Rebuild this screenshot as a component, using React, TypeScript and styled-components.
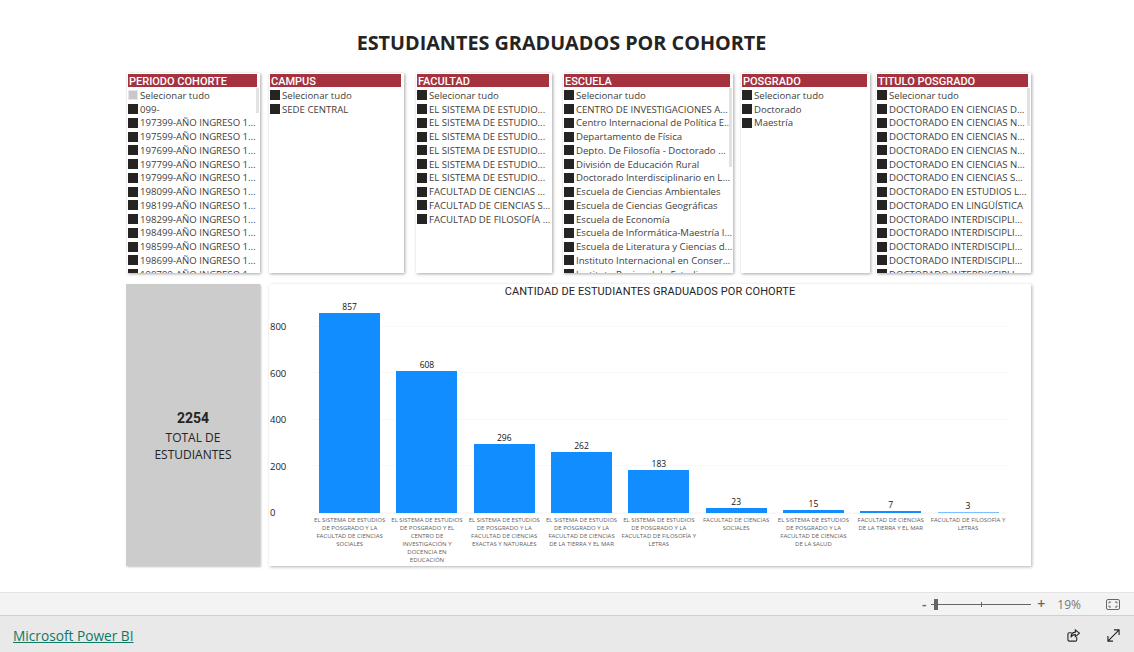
import styled, { createGlobalStyle } from 'styled-components';

const SEGOE = `"Open Sans", "Noto Sans", sans-serif`;
const DIN = `Roboto, "Liberation Sans", sans-serif`;

const SLICERS = [
  {
    title: 'PERIODO COHORTE',
    width: 133,
    gap: 9,
    thumb: 25,
    partial: true,
    items: [
      '099-',
      '197399-AÑO INGRESO 1...',
      '197599-AÑO INGRESO 1...',
      '197699-AÑO INGRESO 1...',
      '197799-AÑO INGRESO 1...',
      '197999-AÑO INGRESO 1...',
      '198099-AÑO INGRESO 1...',
      '198199-AÑO INGRESO 1...',
      '198299-AÑO INGRESO 1...',
      '198499-AÑO INGRESO 1...',
      '198599-AÑO INGRESO 1...',
      '198699-AÑO INGRESO 1...',
      '198799-AÑO INGRESO 1...',
    ],
  },
  { title: 'CAMPUS', width: 135, gap: 12, items: ['SEDE CENTRAL'] },
  {
    title: 'FACULTAD',
    width: 136,
    gap: 11,
    items: [
      'EL SISTEMA DE ESTUDIO...',
      'EL SISTEMA DE ESTUDIO...',
      'EL SISTEMA DE ESTUDIO...',
      'EL SISTEMA DE ESTUDIO...',
      'EL SISTEMA DE ESTUDIO...',
      'EL SISTEMA DE ESTUDIO...',
      'FACULTAD DE CIENCIAS ...',
      'FACULTAD DE CIENCIAS S...',
      'FACULTAD DE FILOSOFÍA ...',
    ],
  },
  {
    title: 'ESCUELA',
    width: 170,
    gap: 8,
    thumb: 79,
    items: [
      'CENTRO DE INVESTIGACIONES A...',
      'Centro Internacional de Política E...',
      'Departamento de Física',
      'Depto. De Filosofía - Doctorado ...',
      'División de Educación Rural',
      'Doctorado Interdisciplinario en L...',
      'Escuela de Ciencias Ambientales',
      'Escuela de Ciencias Geográficas',
      'Escuela de Economía',
      'Escuela de Informática-Maestría I...',
      'Escuela de Literatura y Ciencias d...',
      'Instituto Internacional en Conser...',
      'Instituto Regional de Estudios...',
    ],
  },
  { title: 'POSGRADO', width: 129, gap: 6, items: ['Doctorado', 'Maestría'] },
  {
    title: 'TITULO POSGRADO',
    width: 155,
    gap: 0,
    thumb: 38,
    items: [
      'DOCTORADO EN CIENCIAS D...',
      'DOCTORADO EN CIENCIAS N...',
      'DOCTORADO EN CIENCIAS N...',
      'DOCTORADO EN CIENCIAS N...',
      'DOCTORADO EN CIENCIAS N...',
      'DOCTORADO EN CIENCIAS S...',
      'DOCTORADO EN ESTUDIOS L...',
      'DOCTORADO EN LINGÜÍSTICA',
      'DOCTORADO INTERDISCIPLI...',
      'DOCTORADO INTERDISCIPLI...',
      'DOCTORADO INTERDISCIPLI...',
      'DOCTORADO INTERDISCIPLI...',
      'DOCTORADO INTERDISCIPLI...',
    ],
  },
];

const BARS = [
  { value: 857, label: 'EL SISTEMA DE ESTUDIOS\nDE POSGRADO Y LA\nFACULTAD DE CIENCIAS\nSOCIALES' },
  { value: 608, label: 'EL SISTEMA DE ESTUDIOS\nDE POSGRADO Y EL\nCENTRO DE\nINVESTIGACIÓN Y\nDOCENCIA EN\nEDUCACIÓN' },
  { value: 296, label: 'EL SISTEMA DE ESTUDIOS\nDE POSGRADO Y LA\nFACULTAD DE CIENCIAS\nEXACTAS Y NATURALES' },
  { value: 262, label: 'EL SISTEMA DE ESTUDIOS\nDE POSGRADO Y LA\nFACULTAD DE CIENCIAS\nDE LA TIERRA Y EL MAR' },
  { value: 183, label: 'EL SISTEMA DE ESTUDIOS\nDE POSGRADO Y LA\nFACULTAD DE FILOSOFÍA Y\nLETRAS' },
  { value: 23, label: 'FACULTAD DE CIENCIAS\nSOCIALES' },
  { value: 15, label: 'EL SISTEMA DE ESTUDIOS\nDE POSGRADO Y LA\nFACULTAD DE CIENCIAS\nDE LA SALUD' },
  { value: 7, label: 'FACULTAD DE CIENCIAS\nDE LA TIERRA Y EL MAR' },
  { value: 3, label: 'FACULTAD DE FILOSOFÍA Y\nLETRAS' },
];

const AXIS_TICKS = [800, 600, 400, 200, 0];
const PX_PER_UNIT = 200 / 857;

export default function App() {
  return (
    <PageStyle>
      <GlobalStyle />
      <ReportStyle>
        <TitleStyle>ESTUDIANTES GRADUADOS POR COHORTE</TitleStyle>
        <SlicerRowStyle>
          {SLICERS.map((slicer) => (
            <SlicerStyle key={slicer.title} $width={slicer.width} $gap={slicer.gap}>
              <SlicerHeaderStyle>{slicer.title}</SlicerHeaderStyle>
              <SlicerListStyle>
                <SlicerItemStyle>
                  <CheckboxStyle $partial={slicer.partial} />
                  Selecionar tudo
                </SlicerItemStyle>
                {slicer.items.map((item, i) => (
                  <SlicerItemStyle key={i}>
                    <CheckboxStyle />
                    {item}
                  </SlicerItemStyle>
                ))}
                {slicer.thumb && <ScrollThumbStyle $height={slicer.thumb} />}
              </SlicerListStyle>
            </SlicerStyle>
          ))}
        </SlicerRowStyle>
        <LowerRowStyle>
          <TotalCardStyle>
            <TotalValueStyle>2254</TotalValueStyle>
            <TotalLabelStyle>
              TOTAL DE
              <br />
              ESTUDIANTES
            </TotalLabelStyle>
          </TotalCardStyle>
          <ChartCardStyle>
            <ChartTitleStyle>CANTIDAD DE ESTUDIANTES GRADUADOS POR COHORTE</ChartTitleStyle>
            <ChartBodyStyle>
              <AxisStyle>
                {AXIS_TICKS.map((tick) => (
                  <AxisTickStyle key={tick}>{tick}</AxisTickStyle>
                ))}
              </AxisStyle>
              <ColumnsStyle>
                {BARS.map((bar) => (
                  <ColumnStyle key={bar.label}>
                    <PlotCellStyle>
                      <BarValueStyle>{bar.value}</BarValueStyle>
                      <BarStyle
                        $faded={bar.value < 5}
                        style={{ height: Math.max(1, bar.value * PX_PER_UNIT) }}
                      />
                    </PlotCellStyle>
                    <BarLabelStyle>{bar.label}</BarLabelStyle>
                  </ColumnStyle>
                ))}
              </ColumnsStyle>
            </ChartBodyStyle>
          </ChartCardStyle>
        </LowerRowStyle>
      </ReportStyle>
      <ZoomBarStyle>
        <ZoomSignStyle>-</ZoomSignStyle>
        <SliderStyle>
          <SliderTickStyle />
          <SliderThumbStyle />
        </SliderStyle>
        <ZoomSignStyle>+</ZoomSignStyle>
        <ZoomValueStyle>19%</ZoomValueStyle>
        <FitIconStyle viewBox="0 0 14 11" width="14" height="11">
          <rect x="0.5" y="0.5" width="13" height="10" rx="1.5" fill="none" stroke="#666" />
          <path d="M3 4.5V3h2M9 3h2v1.5M11 6.5V8H9M5 8H3V6.5" fill="none" stroke="#666" />
        </FitIconStyle>
      </ZoomBarStyle>
      <FooterStyle>
        <BrandLinkStyle href="#">Microsoft Power BI</BrandLinkStyle>
        <FooterIconsStyle>
          <svg viewBox="0 0 14 14" width="13" height="13" fill="none" stroke="#252423" strokeWidth="1.2">
            <path d="M10.5 8.5v3a1.5 1.5 0 0 1-1.5 1.5H2.5A1.5 1.5 0 0 1 1 11.500V5.500A1.500 1.500 0 0 1 2.500 4H5" />
            <path d="M9 1l4.500 3.600L9 8.200V6C6.800 6 5.200 7 4.300 9c0-3.400 1.800-5.400 4.700-5.600V1z" />
          </svg>
          <svg viewBox="0 0 14 14" width="13" height="13" fill="none" stroke="#252423" strokeWidth="1.2">
            <path d="M1 13L13 1M7.500 1H13v5.500M1 7.500V13h5.500" />
          </svg>
        </FooterIconsStyle>
      </FooterStyle>
    </PageStyle>
  );
}

const GlobalStyle = createGlobalStyle`
  html, body {
    margin: 0;
    padding: 0;
    background: #ffffff;
    font-family: ${SEGOE};
  }
`;

const PageStyle = styled.div`
  width: 1134px;
  height: 652px;
  display: flex;
  flex-direction: column;
  overflow: hidden;
`;

const ReportStyle = styled.main`
  height: 592px;
  padding: 30px 0 0 126px;
  box-sizing: border-box;
`;

const TitleStyle = styled.h1`
  margin: 0 0 0 -126px;
  height: 26px;
  padding-right: 11px;
  font-size: 19.800px;
  line-height: 26px;
  font-weight: 700;
  text-align: center;
  color: #252423;
`;

const SlicerRowStyle = styled.div`
  display: flex;
  margin: 17px 0 0 1px;
`;

const SlicerStyle = styled.section<{ $width: number; $gap: number }>`
  width: ${({ $width }) => $width}px;
  margin-right: ${({ $gap }) => $gap}px;
  height: 200px;
  background: #ffffff;
  box-shadow: 1px 1px 3px rgba(0, 0, 0, 0.35);
  display: flex;
  flex-direction: column;
  overflow: hidden;
`;

const SlicerHeaderStyle = styled.h2`
  margin: 1px 3px 0 1px;
  height: 13px;
  background: #a4323f;
  color: #ffffff;
  font-family: ${DIN};
  font-size: 11px;
  line-height: 15px;
  font-weight: 500;
  white-space: nowrap;
  padding-left: 1px;
`;

const SlicerListStyle = styled.div`
  position: relative;
  flex: 1;
  padding-top: 1.500px;
  overflow: hidden;
`;

const SlicerItemStyle = styled.div`
  height: 13.750px;
  display: flex;
  align-items: center;
  gap: 2px;
  padding-left: 1px;
  font-size: 9.600px;
  color: #3f3e3d;
  white-space: nowrap;
`;

const CheckboxStyle = styled.span<{ $partial?: boolean }>`
  flex: none;
  width: 10px;
  height: 10px;
  box-sizing: border-box;
  background: ${({ $partial }) => ($partial ? '#c8c8c8' : '#252423')};
  border: 1px solid ${({ $partial }) => ($partial ? '#e6e6e6' : '#252423')};
`;

const ScrollThumbStyle = styled.div<{ $height: number }>`
  position: absolute;
  top: 1px;
  right: 1px;
  width: 3px;
  height: ${({ $height }) => $height}px;
  background: #e2e2e2;
`;

const LowerRowStyle = styled.div`
  display: flex;
  margin-top: 11px;
`;

const TotalCardStyle = styled.section`
  width: 134px;
  height: 282px;
  margin-right: 9px;
  background: #cccccc;
  box-shadow: 1px 1px 2px rgba(0, 0, 0, 0.25);
  display: flex;
  flex-direction: column;
  align-items: center;
  justify-content: center;
  text-align: center;
  color: #252423;
  padding-top: 22px;
  box-sizing: border-box;
`;

const TotalValueStyle = styled.div`
  font-family: ${DIN};
  font-size: 14px;
  line-height: 18px;
  font-weight: 700;
`;

const TotalLabelStyle = styled.div`
  font-size: 12px;
  line-height: 17px;
  margin-top: 2px;
`;

const ChartCardStyle = styled.section`
  width: 762px;
  height: 282px;
  background: #ffffff;
  box-shadow: 1px 1px 3px rgba(0, 0, 0, 0.3);
`;

const ChartTitleStyle = styled.h3`
  margin: 0;
  height: 17px;
  font-family: ${DIN};
  font-size: 11px;
  line-height: 15px;
  font-weight: 400;
  text-align: center;
  letter-spacing: 0.1px;
  color: #252423;
`;

const ChartBodyStyle = styled.div`
  display: flex;
`;

const AxisStyle = styled.div`
  width: 42px;
  height: 213px;
  padding-top: 15px;
  box-sizing: border-box;
  flex: none;
  display: flex;
  flex-direction: column;
  justify-content: space-between;
`;

const AxisTickStyle = styled.span`
  height: 12px;
  line-height: 12px;
  font-size: 9.500px;
  padding-left: 1px;
  color: #1a1a1a;
  transform: translateY(5px);
`;

const ColumnsStyle = styled.div`
  display: flex;
`;

const ColumnStyle = styled.div`
  width: 77.300px;
  display: flex;
  flex-direction: column;
  align-items: center;
`;

const PlotCellStyle = styled.div`
  width: 100%;
  height: 213px;
  display: flex;
  flex-direction: column;
  justify-content: flex-end;
  align-items: center;
  border-bottom: 1px solid #f8f8f8;
  box-sizing: border-box;
  background: repeating-linear-gradient(to top, #f9f9f9 0 1px, transparent 1px 46.600px);
`;

const BarValueStyle = styled.span`
  font-size: 8.500px;
  line-height: 12px;
  color: #111111;
`;

const BarStyle = styled.div<{ $faded: boolean }>`
  width: 61px;
  background: ${({ $faded }) => ($faded ? '#7cc0ff' : '#118dff')};
`;

const BarLabelStyle = styled.div`
  width: 84px;
  margin-top: 2px;
  font-size: 6px;
  line-height: 8px;
  color: #605e5c;
  text-align: center;
  white-space: pre-line;
`;

const ZoomBarStyle = styled.div`
  height: 24px;
  flex: none;
  display: flex;
  align-items: center;
  justify-content: flex-end;
  box-sizing: border-box;
  background: #f3f3f3;
  border-top: 1px solid #e4e4e4;
  border-bottom: 1px solid #cfcfcf;
  padding-right: 14px;
  color: #666666;
`;

const ZoomSignStyle = styled.span`
  width: 8px;
  text-align: center;
  font-size: 14px;
  line-height: 14px;
  font-weight: 600;
`;

const SliderStyle = styled.div`
  position: relative;
  width: 100px;
  height: 1px;
  margin: 0 6px 0 3px;
  background: #666666;
`;

const SliderTickStyle = styled.span`
  position: absolute;
  left: 50px;
  top: -2px;
  width: 1px;
  height: 5px;
  background: #666666;
`;

const SliderThumbStyle = styled.span`
  position: absolute;
  left: 3px;
  top: -5px;
  width: 4px;
  height: 11px;
  background: #666666;
`;

const ZoomValueStyle = styled.span`
  margin: 0 25px 0 12px;
  font-size: 12px;
  color: #777777;
`;

const FitIconStyle = styled.svg`
  display: block;
`;

const FooterStyle = styled.footer`
  flex: 1;
  display: flex;
  align-items: center;
  justify-content: space-between;
  background: #e9e9e9;
  padding: 3px 14px 0 13px;
`;

const BrandLinkStyle = styled.a`
  font-size: 13.700px;
  color: #117865;
  text-decoration: underline;
`;

const FooterIconsStyle = styled.div`
  display: flex;
  gap: 27px;
  align-items: center;

  svg {
    display: block;
  }
`;
